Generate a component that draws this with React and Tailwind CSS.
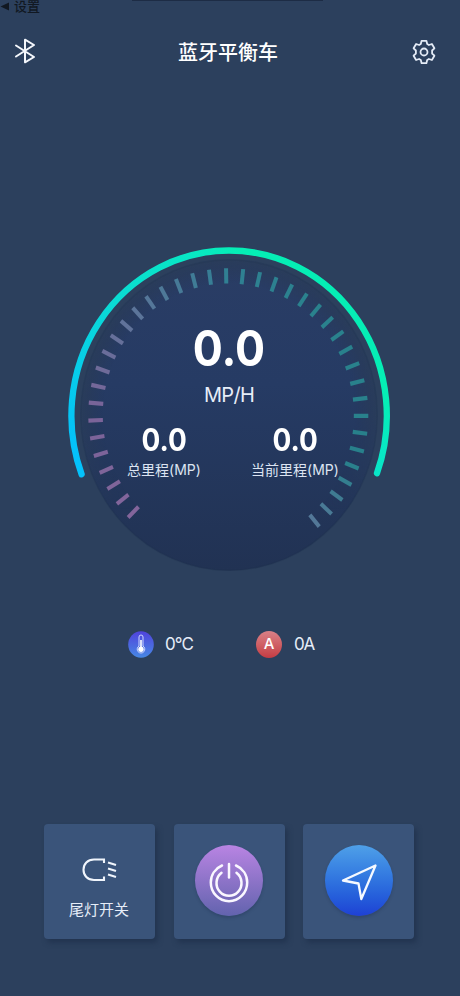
import React from "react";

const STEP = 7.02;
const START = -134.3;
const STOPS = [
  [-135, [131, 101, 155]],
  [-88, [122, 100, 153]],
  [-45, [94, 117, 154]],
  [-15, [64, 124, 150]],
  [0, [48, 128, 147]],
  [40, [42, 130, 141]],
  [110, [40, 128, 139]],
  [140, [84, 120, 152]],
];

function tickColor(a) {
  let i = 0;
  while (i < STOPS.length - 2 && a > STOPS[i + 1][0]) i++;
  const [a0, c0] = STOPS[i];
  const [a1, c1] = STOPS[i + 1];
  const t = Math.max(0, Math.min(1, (a - a0) / (a1 - a0)));
  return `rgb(${c0.map((v, k) => Math.round(v + (c1[k] - v) * t)).join(",")})`;
}

function Dial() {
  return (
    <svg className="col-start-1 row-start-1" width="340" height="350" viewBox="0 0 340 350" fill="none">
      <defs>
        <linearGradient id="arc" gradientUnits="userSpaceOnUse" x1="-155" y1="30" x2="20" y2="-150">
          <stop offset="0" stopColor="#04c2fb" />
          <stop offset="0.5" stopColor="#0adbd4" />
          <stop offset="0.85" stopColor="#08e8c4" />
          <stop offset="1" stopColor="#05eeb5" />
        </linearGradient>
        <linearGradient id="disc" x1="0" y1="0" x2="0" y2="1">
          <stop offset="0" stopColor="#2a3d65" />
          <stop offset="0.4" stopColor="#263b64" />
          <stop offset="1" stopColor="#213253" />
        </linearGradient>
        <radialGradient id="rim">
          <stop offset="0.85" stopColor="#293b59" stopOpacity="0" />
          <stop offset="0.95" stopColor="#293b59" stopOpacity="0.7" />
          <stop offset="1" stopColor="#2a3d5a" stopOpacity="0.9" />
        </radialGradient>
        <linearGradient id="rimFade" x1="0" y1="0" x2="0" y2="1">
          <stop offset="0.5" stopColor="#fff" />
          <stop offset="0.8" stopColor="#000" />
        </linearGradient>
        <mask id="upper" maskUnits="userSpaceOnUse" x="-150" y="-150" width="300" height="300">
          <rect x="-150" y="-150" width="300" height="300" fill="url(#rimFade)" />
        </mask>
      </defs>
      <g transform="translate(169 175) scale(1 1.048)">
        <circle r="148.5" fill="url(#disc)" />
        <circle r="148.5" fill="url(#rim)" mask="url(#upper)" />
        <circle r="148.2" stroke="#1f304d" strokeOpacity="0.2" strokeWidth="1.5" />
        {Array.from({ length: 40 }, (_, i) => {
          const a = START + i * STEP;
          return (
            <line key={i} x1="0" x2="0" y1="-125.5" y2="-140" stroke={tickColor(a)} strokeWidth="4" transform={`translate(-0.7 0) rotate(${a})`} />
          );
        })}
        <path d="M-147.4 56.500A157.7 157.7 0 1 1 148 55.500" stroke="url(#arc)" strokeWidth="6.3" strokeLinecap="round" />
      </g>
    </svg>
  );
}

function Stat({ label, className }) {
  return (
    <div className={"flex flex-col items-center " + className}>
      <span className="scale-x-[0.9] text-[31px] leading-[30px] font-bold">0.0</span>
      <span className="mt-[5px] whitespace-nowrap text-[14px] leading-[20px] text-[#dce4f2]">{label}</span>
    </div>
  );
}

function Card({ children }) {
  return (
    <div className="flex h-[115px] w-[111px] flex-col items-center rounded-[4px] bg-[#3a547a] shadow-[3px_4px_5px_#1e304bb0]">
      {children}
    </div>
  );
}

export default function App() {
  return (
    <div className="flex h-[996px] w-[460px] flex-col overflow-hidden bg-[#2c405d] font-['Inter','Noto_Sans_CJK_SC',sans-serif] text-white">
      <div className="flex h-[24px] items-start justify-between">
        <div className="flex w-[132px] items-center text-[#111822]">
          <svg width="10" height="11" viewBox="0 0 10 11"><path d="M0.500 5.5 9 1.500v8z" fill="currentColor" /></svg>
          <span className="ml-[4px] text-[13px] leading-[13px] font-medium">设置</span>
        </div>
        <div className="mr-[137px] h-px w-[191px] bg-[#1d2c45]" />
      </div>

      <header className="flex h-[54px] items-center justify-between pl-[14px] pr-[24px]">
        <svg width="22" height="26" viewBox="0 0 22 26" fill="none" stroke="#f4f7fc" strokeWidth="2" strokeLinecap="round" strokeLinejoin="round">
          <path d="M2 7.5 20 19l-9 5.3V1.7L20 7 2 18.5" />
        </svg>
        <h1 className="ml-[8px] mt-[3px] text-[20px] leading-[28px] font-medium">蓝牙平衡车</h1>
        <svg className="mt-px" width="24" height="26" viewBox="0 0 24 26" fill="none" stroke="#e4ebf6" strokeWidth="1.8" strokeLinejoin="round">
          <path d="M9.6 1.8h4.8l.8 3.2 1.7 1 3-1 2.5 4.3-2.3 2.2v3l2.3 2.2-2.5 4.3-3-1-1.7 1-.8 3.2H9.6L8.800 21l-1.700-1-3 1-2.500-4.300 2.300-2.200v-3L1.600 9.300 4.100 5l3 1 1.700-1z" />
          <circle cx="12" cy="13" r="3.500" />
        </svg>
      </header>

      <main className="mt-[162px] ml-[60px] grid h-[350px] w-[340px]">
        <Dial />
        <div className="col-start-1 row-start-1 flex flex-col items-center pt-[85px]">
          <div className="scale-x-[0.91] pr-[3px] text-[49px] leading-[48px] font-bold">0.0</div>
          <div className="mt-[10px] pr-[2px] text-[20px] leading-[24px] tracking-[-0.7px] text-[#e6edf8]">MP/H</div>
          <div className="mt-[18px] flex w-full">
            <Stat label="总里程(MP)" className="ml-[64px] w-[80px]" />
            <Stat label="当前里程(MP)" className="ml-[45px] w-[92px]" />
          </div>
        </div>
      </main>

      <section className="mt-[40px] ml-[128px] flex h-[28px] items-center text-[17px] text-[#e6edf8]">
        <div className="flex w-[128px] items-center gap-[11px]">
          <svg width="26" height="27" viewBox="0 0 26 27" fill="none">
            <defs>
              <linearGradient id="temp" x1="0" y1="0" x2="0" y2="1">
                <stop offset="0" stopColor="#5043dc" />
                <stop offset="1" stopColor="#4788e4" />
              </linearGradient>
            </defs>
            <ellipse cx="13" cy="13.500" rx="12.800" ry="13.200" fill="url(#temp)" />
            <path d="M11 15V6a2 2 0 0 1 4 0v9a3.800 3.800 0 1 1-4 0z" stroke="#cfd6ff" strokeWidth="1" />
            <path d="M13 9v9" stroke="#fff" strokeWidth="1.600" />
            <circle cx="13" cy="18.300" r="2.700" fill="#fff" />
          </svg>
          <span className="pt-[2px] tracking-[-0.9px]">0°C</span>
        </div>
        <div className="flex items-center gap-[12px]">
          <div className="flex h-[27px] w-[26px] items-center justify-center rounded-[50%] bg-linear-to-b from-[#d98087] to-[#c43b43] text-[15px] font-medium text-white">A</div>
          <span className="pt-[2px] tracking-[-1.2px]">0A</span>
        </div>
      </section>

      <footer className="mt-[166px] ml-[44px] flex gap-[18.500px]">
        <Card>
          <svg className="mt-[33px]" width="36" height="26" viewBox="0 0 36 26" fill="none" stroke="#f0f5fc" strokeWidth="2.100">
            <path d="M22 6V2.500H12C5.500 2.500 1.500 7 1.500 12.700S5.500 23 12 23h10v-3.500" />
            <path d="m26 5.500 8 2.500M26 11.500l8 2.500M26 17.500l8 2.500" />
          </svg>
          <span className="mt-[17px] mr-[1px] text-[15px] leading-[20px] text-[#e6edf8]">尾灯开关</span>
        </Card>
        <Card>
          <div className="mt-[21px] flex h-[71px] w-[68px] items-center justify-center rounded-[50%] bg-linear-to-b from-[#b984e3] to-[#6263ae] shadow-[0_2px_3px_#25395a70]">
            <svg width="44" height="46" viewBox="0 0 44 46" fill="none" stroke="#faf7ff" strokeWidth="2.500" strokeLinecap="round">
              <path d="M15 7.500C8 10.500 3.800 17 3.800 24.500a18.200 18.700 0 0 0 36.400 0C40.200 17 36 10.500 29 7.500" />
              <path d="M14.500 14.800a12.500 12.800 0 1 0 15 0" />
              <path d="M22 6v13.500" />
            </svg>
          </div>
        </Card>
        <Card>
          <div className="mt-[21px] flex h-[71px] w-[68px] items-center justify-center rounded-[50%] bg-linear-to-b from-[#4fa0e8] to-[#1f40d4] shadow-[0_2px_3px_#25395a70]">
            <svg width="40" height="42" viewBox="0 0 40 42" fill="none" stroke="#f5f9ff" strokeWidth="2.300" strokeLinejoin="round">
              <path d="M36.500 5.500 4 20.500l15.500 3L22.300 39z" />
            </svg>
          </div>
        </Card>
      </footer>
    </div>
  );
}
